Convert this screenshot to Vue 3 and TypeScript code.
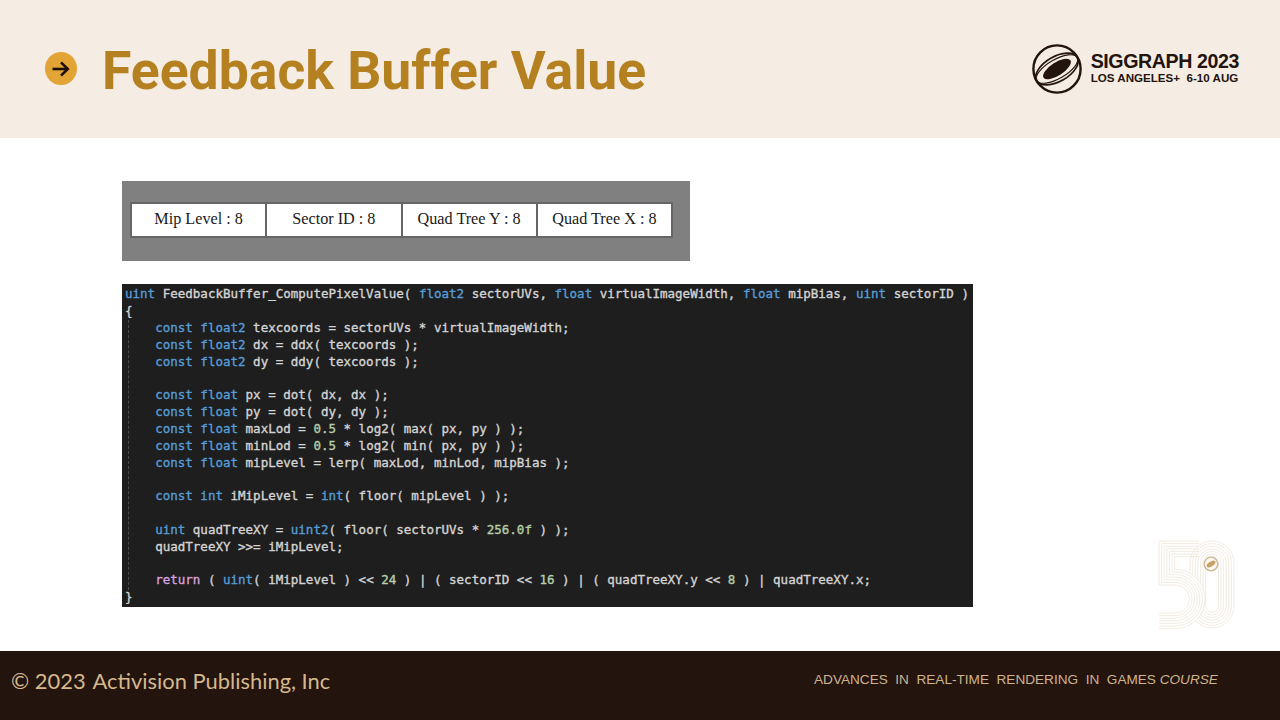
<script setup lang="ts">
type Tok = { t: string; c?: string }
const k = (t: string): Tok => ({ t, c: 'kw' })
const n = (t: string): Tok => ({ t, c: 'num' })
const r = (t: string): Tok => ({ t, c: 'ret' })
const p = (t: string): Tok => ({ t })

const lines: Tok[][] = [
  [k('uint'), p(' FeedbackBuffer_ComputePixelValue( '), k('float2'), p(' sectorUVs, '), k('float'), p(' virtualImageWidth, '), k('float'), p(' mipBias, '), k('uint'), p(' sectorID )')],
  [p('{')],
  [p('    '), k('const float2'), p(' texcoords = sectorUVs * virtualImageWidth;')],
  [p('    '), k('const float2'), p(' dx = ddx( texcoords );')],
  [p('    '), k('const float2'), p(' dy = ddy( texcoords );')],
  [p(' ')],
  [p('    '), k('const float'), p(' px = dot( dx, dx );')],
  [p('    '), k('const float'), p(' py = dot( dy, dy );')],
  [p('    '), k('const float'), p(' maxLod = '), n('0.5'), p(' * log2( max( px, py ) );')],
  [p('    '), k('const float'), p(' minLod = '), n('0.5'), p(' * log2( min( px, py ) );')],
  [p('    '), k('const float'), p(' mipLevel = lerp( maxLod, minLod, mipBias );')],
  [p(' ')],
  [p('    '), k('const int'), p(' iMipLevel = '), k('int'), p('( floor( mipLevel ) );')],
  [p(' ')],
  [p('    '), k('uint'), p(' quadTreeXY = '), k('uint2'), p('( floor( sectorUVs * '), n('256.0f'), p(' ) );')],
  [p('    quadTreeXY >>= iMipLevel;')],
  [p(' ')],
  [p('    '), r('return'), p(' ( '), k('uint'), p('( iMipLevel ) << '), n('24'), p(' ) | ( sectorID << '), n('16'), p(' ) | ( quadTreeXY.y << '), n('8'), p(' ) | quadTreeXY.x;')],
  [p('}')],
]
const cells = ['Mip Level : 8', 'Sector ID : 8', 'Quad Tree Y : 8', 'Quad Tree X : 8']

const steps = [0, 1, 2, 3, 4, 5, 6].map((i) => i * 2.6)
const five = (s: number) => {
  const rad = 14 + s
  return `M41 ${1 + s}H${1 + s}V${45 - s}H17.4A${rad} ${rad} 0 0 1 17.4 ${59 + rad}H1`
}
const zero = (s: number) => {
  const rad = 22 - s
  return `M${32 + s} 23A${rad} ${rad} 0 0 1 ${76 - s} 23V66A${rad} ${rad} 0 0 1 ${32 + s} 66Z`
}
</script>

<template>
  <div class="slide">
    <header class="head">
      <div class="bullet">
        <svg width="20" height="20" viewBox="0 0 20 20" fill="none" stroke="#1d0f08" stroke-width="2.6">
          <path d="M1.5 10H16.5" />
          <path d="M10 3.4L16.8 10L10 16.6" />
        </svg>
      </div>
      <h1 class="title">Feedback Buffer Value</h1>
      <div class="brand">
        <svg class="globe" width="50" height="50" viewBox="0 0 50 50" fill="none" stroke="#23140e">
          <circle cx="25" cy="25" r="23.6" stroke-width="2.4" />
          <ellipse cx="25" cy="25" rx="16" ry="6.6" transform="rotate(-33 25 25)" fill="#23140e" stroke="none" />
          <ellipse cx="25" cy="25" rx="23.4" ry="12.5" transform="rotate(-30 25 25)" stroke-width="1.7" />
          <ellipse cx="25" cy="25" rx="23.4" ry="9.5" transform="rotate(-30 25 25)" stroke-width="1.1" />
        </svg>
        <div class="brand-text">
          <div class="brand-a">SIGGRAPH 2023</div>
          <div class="brand-b">LOS ANGELES+&nbsp; 6-10 AUG</div>
        </div>
      </div>
    </header>

    <main class="body">
      <section class="panel">
        <div class="table">
          <div v-for="c in cells" :key="c" class="cell">{{ c }}</div>
        </div>
      </section>
      <section class="code">
        <div class="guide"></div>
        <div v-for="(l, i) in lines" :key="i" class="line"><span v-for="(tk, j) in l" :key="j" :class="tk.c">{{ tk.t }}</span></div>
      </section>
      <svg class="mark" width="78" height="90" viewBox="0 0 78 90" fill="none" stroke="#efe7da" stroke-width="0.8">
        <path v-for="s in steps" :key="'z' + s" :d="zero(s)" />
        <path d="M0 0H30V29H17A30 30 0 0 1 17 89H0Z" fill="#fff" stroke="none" />
        <path v-for="s in steps" :key="'f' + s" :d="five(s)" />
        <circle cx="53" cy="24" r="6.8" fill="#fbf8f3" stroke="#cdb48e" stroke-width="1.3" />
        <ellipse cx="53" cy="24" rx="5" ry="2.3" transform="rotate(-35 53 24)" fill="#c9a066" stroke="none" />
      </svg>
    </main>

    <footer class="foot">
      <div class="copy">© 2023&nbsp;&#8202;Activision Publishing, Inc</div>
      <div class="course">ADVANCES &nbsp;IN &nbsp;REAL-TIME &nbsp;RENDERING &nbsp;IN &nbsp;GAMES <em>COURSE</em></div>
    </footer>
  </div>
</template>

<style>
html, body { margin: 0; background: #fff; }
</style>

<style scoped>
.slide {
  width: 1280px;
  height: 720px;
  display: flex;
  flex-direction: column;
  overflow: hidden;
  background: #fff;
}
.head {
  height: 138px;
  flex: none;
  background: #f5ece3;
  display: flex;
  align-items: center;
  padding: 0 41px 0 45px;
  box-sizing: border-box;
}
.bullet {
  width: 32px;
  height: 33px;
  border-radius: 50%;
  background: #e2a535;
  display: flex;
  align-items: center;
  justify-content: center;
  margin-top: -1px;
}
.title {
  margin: 4px 0 0 25px;
  font: 700 53.5px/60px Roboto, sans-serif;
  color: #b48020;
  flex: 1;
}
.brand {
  display: flex;
  align-items: center;
  gap: 9px;
}
.brand-text {
  font-family: "Liberation Sans", sans-serif;
  color: #23140e;
  font-weight: 700;
  margin-top: -2px;
}
.brand-a {
  font-size: 19.6px;
  line-height: 20px;
  letter-spacing: -0.4px;
  white-space: nowrap;
}
.brand-b {
  font-size: 11.6px;
  line-height: 14px;
  white-space: nowrap;
}
.body {
  flex: 1;
  position: relative;
  padding: 43px 0 0 122px;
  display: flex;
  flex-direction: column;
  align-items: flex-start;
}
.panel {
  width: 568px;
  height: 80px;
  background: #808080;
  padding: 21px 0 0 8px;
  box-sizing: border-box;
}
.table {
  width: 543px;
  height: 36px;
  display: flex;
  background: #fff;
  border: 2px solid #666;
  box-sizing: border-box;
}
.cell {
  flex: 1;
  display: flex;
  align-items: center;
  justify-content: center;
  font: 16.2px "Liberation Serif", serif;
  color: #1a1a1a;
  border-left: 2px solid #666;
  padding-bottom: 2px;
  box-sizing: border-box;
  white-space: nowrap;
}
.cell:first-child { border-left: none; }
.code {
  position: relative;
  margin-top: 23px;
  width: 851px;
  height: 323px;
  background: #1e1e1e;
  padding: 2.4px 0 0 3px;
  box-sizing: border-box;
  font: 400 12.53px/16.83px "DejaVu Sans Mono", monospace;
  -webkit-text-stroke: 0.35px currentColor;
  color: #d4d4d4;
}
.line { white-space: pre; height: 16.83px; }
.guide {
  position: absolute;
  left: 6px;
  top: 36px;
  height: 270px;
  border-left: 1px dashed #4a4a4a;
}
.kw { color: #569cd6; }
.num { color: #b5cea8; }
.ret { color: #d8a0df; }
.mark {
  position: absolute;
  left: 1158px;
  top: 402px;
}
.foot {
  height: 69px;
  flex: none;
  background: #23140e;
  display: flex;
  align-items: center;
  padding: 0 0 8px 11px;
  box-sizing: border-box;
}
.copy {
  font: 21.9px Lato, sans-serif;
  color: #d6b88d;
  width: 803px;
  white-space: nowrap;
  margin-top: -2px;
}
.course {
  font: 13.6px "Liberation Sans", sans-serif;
  color: #cfb38c;
  white-space: nowrap;
  margin-top: -5px;
}
.course em { font-style: italic; }
</style>
